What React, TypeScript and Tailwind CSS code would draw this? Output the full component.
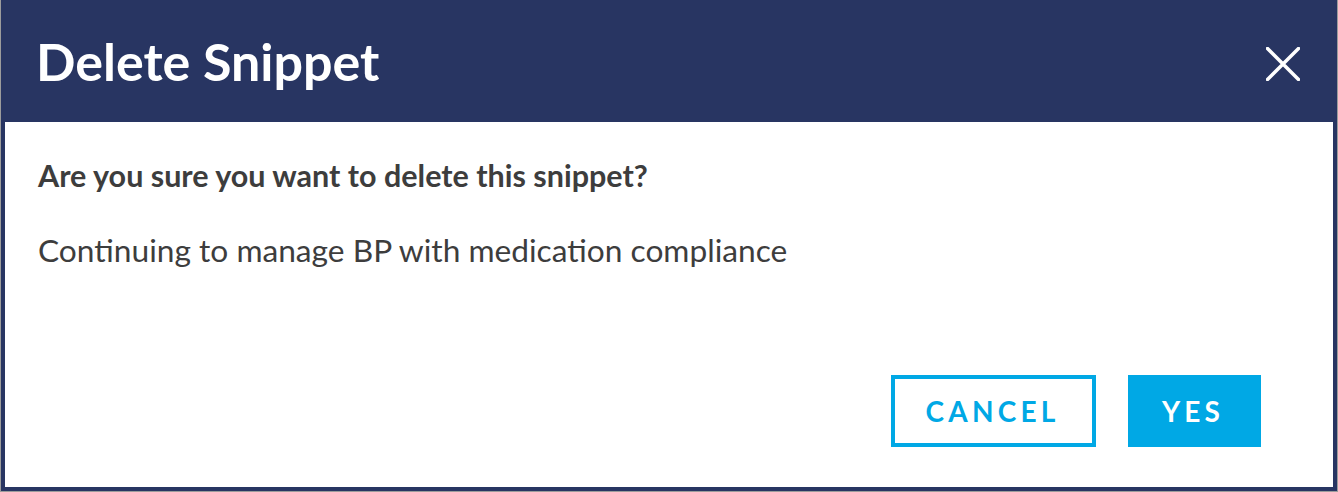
export default function App() {
  return (
    <div className="h-[492px] w-[1338px] bg-[#9c9c9c] pl-px pr-px font-['Lato','Liberation_Sans',sans-serif]">
      <div className="flex h-[491px] flex-col border-4 border-t-0 border-[#283562] bg-white">
        <div className="flex h-[122px] shrink-0 items-center justify-between bg-[#283562] pl-[31px] pr-[33px]">
          <h2 className="text-[52px] font-bold leading-[62px] text-white">Delete Snippet</h2>
          <button className="mt-[6px] flex h-[34px] w-[34px] items-center justify-center" aria-label="Close">
            <svg width="34" height="34" viewBox="0 0 34 34" fill="none">
              <path d="M1.5 1.5 L32.5 32.5 M32.5 1.5 L1.5 32.5" stroke="white" strokeWidth="3.5" strokeLinecap="square" />
            </svg>
          </button>
        </div>

        <div className="flex flex-1 flex-col px-[33px] pt-[35px] text-[#3d3d3d]">
          <p className="text-[30.5px] font-bold leading-[37px]">Are you sure you want to delete this snippet?</p>
          <p className="mt-[38px] text-[31.7px] leading-[37px]">Continuing to manage BP with medication compliance</p>

          <div className="mt-auto flex justify-end gap-[32px] pb-[40px] pr-[39px]">
            <button className="flex h-[72px] w-[205px] items-center justify-center border-4 border-[#00a8e5] bg-white pr-[2px] text-[28px] font-bold tracking-[0.15em] text-[#00a8e5]">
              CANCEL
            </button>
            <button className="flex h-[72px] w-[133px] items-center justify-center bg-[#00a8e5] pr-[3px] text-[28px] font-bold tracking-[0.15em] text-white">
              YES
            </button>
          </div>
        </div>
      </div>
    </div>
  );
}
